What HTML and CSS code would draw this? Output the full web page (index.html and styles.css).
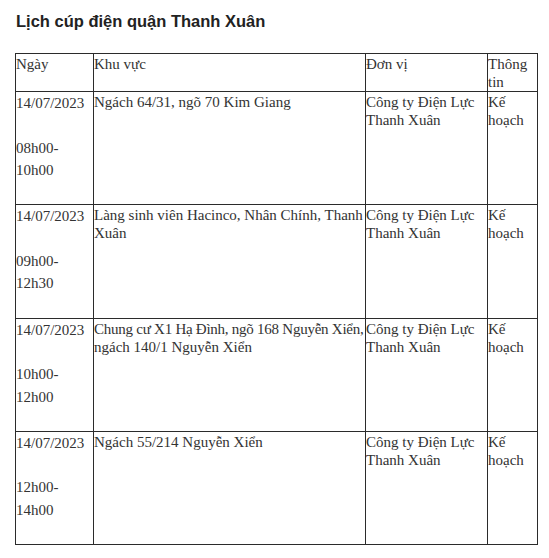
FILE: index.html
```html
<!DOCTYPE html>
<html>
<head>
<meta charset="utf-8">
<title>Lịch cúp điện quận Thanh Xuân</title>
<link rel="stylesheet" href="styles.css">
</head>
<body>
<h2 class="title">Lịch cúp điện quận Thanh Xuân</h2>
<table class="schedule">
  <colgroup>
    <col class="c-date">
    <col class="c-area">
    <col class="c-unit">
    <col class="c-info">
  </colgroup>
  <tr class="head">
    <td>Ngày</td>
    <td>Khu vực</td>
    <td>Đơn vị</td>
    <td>Thông tin</td>
  </tr>
  <tr class="row">
    <td class="date"><p class="day">14/07/2023</p><p class="time">08h00-<br>10h00</p></td>
    <td>Ngách 64/31, ngõ 70 Kim Giang</td>
    <td>Công ty Điện Lực Thanh Xuân</td>
    <td>Kế hoạch</td>
  </tr>
  <tr class="row">
    <td class="date"><p class="day">14/07/2023</p><p class="time">09h00-<br>12h30</p></td>
    <td>Làng sinh viên Hacinco, Nhân Chính, Thanh<br>Xuân</td>
    <td>Công ty Điện Lực Thanh Xuân</td>
    <td>Kế hoạch</td>
  </tr>
  <tr class="row">
    <td class="date"><p class="day">14/07/2023</p><p class="time">10h00-<br>12h00</p></td>
    <td><span class="nowrap">Chung cư X1 Hạ Đình, ngõ 168 Nguyễn Xiển,</span><br>ngách 140/1 Nguyễn Xiển</td>
    <td>Công ty Điện Lực Thanh Xuân</td>
    <td>Kế hoạch</td>
  </tr>
  <tr class="row">
    <td class="date"><p class="day">14/07/2023</p><p class="time">12h00-<br>14h00</p></td>
    <td>Ngách 55/214 Nguyễn Xiển</td>
    <td>Công ty Điện Lực Thanh Xuân</td>
    <td>Kế hoạch</td>
  </tr>
</table>
</body>
</html>
```

FILE: styles.css
```css
html, body {
  margin: 0;
  padding: 0;
  background: #ffffff;
}
body {
  padding: 12px 0 0 15px;
}
.title {
  margin: 0 0 22px 1px;
  font-family: "Liberation Sans", Arial, sans-serif;
  font-weight: bold;
  font-size: 16.5px;
  line-height: 19px;
  color: #222222;
}
.schedule {
  border-collapse: collapse;
  table-layout: fixed;
  width: 522px;
  font-family: "Liberation Serif", "Times New Roman", serif;
  font-size: 15px;
  line-height: 18px;
  color: #333333;
}
.schedule td {
  font-family: "Liberation Serif", "Times New Roman", serif;
  border: 1px solid #2b2b2b;
  padding: 1px 1px 0 0;
  vertical-align: top;
  overflow: visible;
}
.c-date { width: 78px; }
.c-area { width: 272px; }
.c-unit { width: 122px; }
.c-info { width: 50px; }
.head td {
  height: 34px;
}
.row td {
  height: 111.3px;
}
.date p {
  margin: 0;
  line-height: 21px;
}
.date .time {
  margin-top: 22.5px;
  line-height: 22.5px;
}
.nowrap {
  white-space: nowrap;
  letter-spacing: -0.25px;
}
```
